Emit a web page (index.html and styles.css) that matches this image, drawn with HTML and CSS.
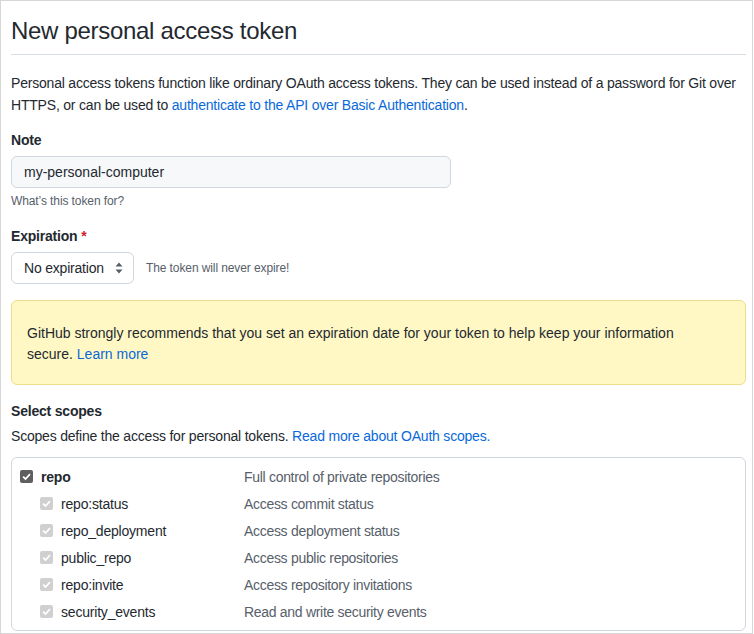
FILE: index.html
```html
<!DOCTYPE html>
<html lang="en">
<head>
<meta charset="utf-8">
<title>New personal access token</title>
<link rel="stylesheet" href="styles.css">
</head>
<body>
<div class="frame">
  <h1 class="title">New personal access token</h1>
  <p class="intro">Personal access tokens function like ordinary OAuth access tokens. They can be used instead of a password for Git over HTTPS, or can be used to <a href="#" class="link">authenticate to the API over Basic Authentication</a>.</p>

  <div class="field">
    <label class="label">Note</label>
    <div class="input">my-personal-computer</div>
    <p class="hint">What’s this token for?</p>
  </div>

  <div class="field field-exp">
    <label class="label">Expiration <span class="req">*</span></label>
    <div class="exp-row">
      <div class="select">
        <span>No expiration</span>
        <svg class="caret" width="8" height="12" viewBox="0 0 8 12"><path d="M4 0.5 L7.5 4.5 L0.5 4.5 Z M4 11.5 L7.5 7.5 L0.5 7.5 Z" fill="#57606a"/></svg>
      </div>
      <span class="exp-note">The token will never expire!</span>
    </div>
  </div>

  <div class="flash">GitHub strongly recommends that you set an expiration date for your token to help keep your information secure. <a href="#" class="link">Learn more</a></div>

  <h3 class="scopes-title">Select scopes</h3>
  <p class="scopes-desc">Scopes define the access for personal tokens. <a href="#" class="link">Read more about OAuth scopes.</a></p>

  <div class="scopes">
    <div class="row">
      <div class="name parent"><span class="cb cb-on"><svg viewBox="0 0 12 12" width="11" height="11"><path d="M2.3 6.2 L4.9 8.7 L9.8 3.4" fill="none" stroke="#fff" stroke-width="1.9"/></svg></span><strong>repo</strong></div>
      <div class="desc">Full control of private repositories</div>
    </div>
    <div class="row">
      <div class="name child"><span class="cb cb-dis"><svg viewBox="0 0 12 12" width="11" height="11"><path d="M2.3 6.2 L4.9 8.7 L9.8 3.4" fill="none" stroke="#fff" stroke-width="1.9"/></svg></span>repo:status</div>
      <div class="desc">Access commit status</div>
    </div>
    <div class="row">
      <div class="name child"><span class="cb cb-dis"><svg viewBox="0 0 12 12" width="11" height="11"><path d="M2.3 6.2 L4.9 8.7 L9.8 3.4" fill="none" stroke="#fff" stroke-width="1.9"/></svg></span>repo_deployment</div>
      <div class="desc">Access deployment status</div>
    </div>
    <div class="row">
      <div class="name child"><span class="cb cb-dis"><svg viewBox="0 0 12 12" width="11" height="11"><path d="M2.3 6.2 L4.9 8.7 L9.8 3.4" fill="none" stroke="#fff" stroke-width="1.9"/></svg></span>public_repo</div>
      <div class="desc">Access public repositories</div>
    </div>
    <div class="row">
      <div class="name child"><span class="cb cb-dis"><svg viewBox="0 0 12 12" width="11" height="11"><path d="M2.3 6.2 L4.9 8.7 L9.8 3.4" fill="none" stroke="#fff" stroke-width="1.9"/></svg></span>repo:invite</div>
      <div class="desc">Access repository invitations</div>
    </div>
    <div class="row">
      <div class="name child"><span class="cb cb-dis"><svg viewBox="0 0 12 12" width="11" height="11"><path d="M2.3 6.2 L4.9 8.7 L9.8 3.4" fill="none" stroke="#fff" stroke-width="1.9"/></svg></span>security_events</div>
      <div class="desc">Read and write security events</div>
    </div>
  </div>
</div>
</body>
</html>
```
FILE: styles.css
```css
* { box-sizing: border-box; }
html, body { margin: 0; padding: 0; background: #fff; }
body {
  font-family: "Liberation Sans", Arial, sans-serif;
  font-size: 14px;
  letter-spacing: -0.2px;
  color: #24292f;
}
.frame {
  width: 753px;
  height: 634px;
  border: 1px solid #d6d6d6;
  padding: 15px 6px 0 10px;
  overflow: hidden;
}
.title {
  margin: 0;
  font-size: 24px;
  font-weight: 400;
  letter-spacing: -0.3px;
  line-height: 30px;
  padding-bottom: 8px;
  border-bottom: 1px solid #d8dee4;
}
.intro {
  margin: 17px 0 0;
  line-height: 22px;
}
.link { color: #0969da; text-decoration: none; }
.field { margin-top: 14px; }
.field-exp { margin-top: 16px; }
.label {
  display: block;
  font-weight: 700;
  line-height: 20px;
}
.req { color: #cf222e; }
.input {
  margin-top: 6px;
  width: 440px;
  height: 32px;
  padding: 0 12px;
  line-height: 30px;
  letter-spacing: 0;
  background: #f6f8fa;
  border: 1px solid #d0d7de;
  border-radius: 6px;
}
.hint {
  margin: 4px 0 0;
  font-size: 12px;
  letter-spacing: -0.1px;
  line-height: 18px;
  color: #57606a;
}
.exp-row {
  margin-top: 6px;
  display: flex;
  align-items: center;
  gap: 12px;
}
.select {
  width: 123px;
  height: 32px;
  padding: 0 10px 0 12px;
  border: 1px solid #d0d7de;
  border-radius: 6px;
  display: flex;
  align-items: center;
  justify-content: space-between;
}
.exp-note { font-size: 12px; letter-spacing: -0.1px; color: #57606a; }
.flash {
  margin-top: 16px;
  padding: 22px 60px 19px 15px;
  line-height: 21px;
  letter-spacing: 0;
  background: #fff8c5;
  border: 1px solid #eedd8c;
  border-radius: 6px;
}
.scopes-title {
  margin: 16px 0 0;
  font-size: 14px;
  font-weight: 700;
  line-height: 20px;
}
.scopes-desc {
  margin: 4px 0 0;
  line-height: 22px;
}
.scopes {
  margin-top: 10px;
  border: 1px solid #d0d7de;
  border-radius: 6px;
  padding: 5px 0 0;
  height: 174px;
}
.row {
  display: flex;
  align-items: center;
  height: 27px;
}
.name {
  width: 232px;
  display: flex;
  align-items: center;
}
.parent { padding-left: 8px; }
.child { padding-left: 28px; }
.parent strong { font-weight: 700; }
.cb {
  width: 13px;
  height: 13px;
  border-radius: 2px;
  display: inline-flex;
  align-items: center;
  justify-content: center;
  margin-right: 8px;
}
.cb-on { background: #5f5f5f; }
.cb-dis { background: #d0d0d0; }
.desc { color: #57606a; letter-spacing: -0.3px; }
```
